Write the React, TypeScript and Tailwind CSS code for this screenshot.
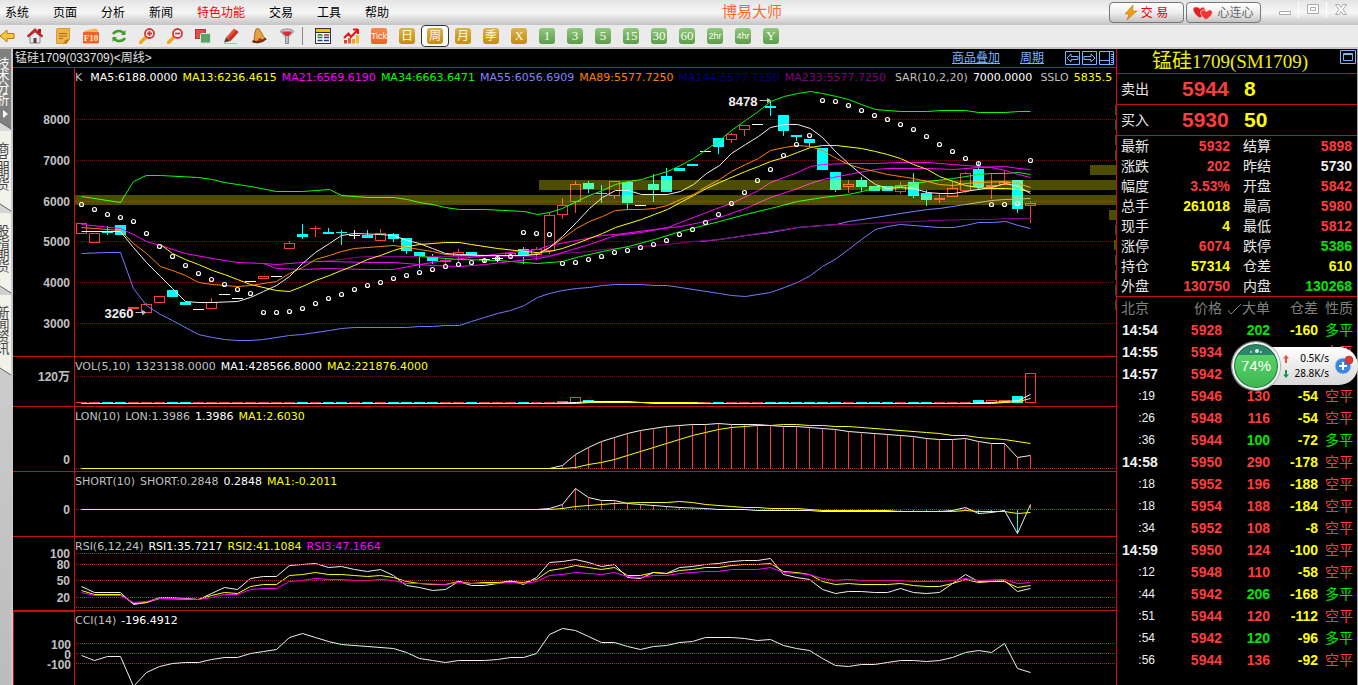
import React from "react";

type Point = [number, number];
type Candle = [kind: "r" | "c" | "w", high: number, top: number, bottom: number, low: number];

const RED = "#ff3c3c";
const CYAN = "#00ffff";
const X0 = 81;
const STEP = 13;
const xAt = (i: number) => X0 + i * STEP;

const parse = (s: string): Point[] =>
  s.trim().split(/\s+/).map((p) => p.split(",").map(Number) as Point);

function valueAt(points: Point[], x: number) {
  for (let i = 1; i < points.length; i++) {
    const [x1, y1] = points[i];
    const [x0, y0] = points[i - 1];
    if (x <= x1) return y0 + ((y1 - y0) * (x - x0)) / (x1 - x0);
  }
  return points[points.length - 1][1];
}

const candles: Candle[] = [
  ["r", 223, 223, 233, 233], ["r", 233, 233, 242, 242], ["c", 225, 232, 232, 233], ["c", 225, 225, 234, 234],
  ["r", 307, 307, 308, 308], ["r", 302, 304, 312, 312], ["r", 296, 296, 302, 302], ["c", 290, 290, 296, 296],
  ["c", 302, 302, 304, 304], ["w", 309, 309, 309, 309], ["r", 297, 302, 308, 308], ["w", 294, 294, 294, 294],
  ["w", 298, 298, 298, 298], ["w", 281, 281, 281, 281], ["r", 275, 276, 278, 278], ["w", 276, 276, 276, 276],
  ["r", 240, 243, 248, 248], ["c", 223, 234, 236, 237], ["r", 225, 228, 228, 235], ["c", 227, 232, 233, 233],
  ["c", 229, 232, 232, 243], ["w", 229, 235, 235, 237], ["c", 229, 235, 237, 237], ["r", 228, 233, 240, 240],
  ["c", 232, 234, 238, 240], ["c", 238, 238, 250, 252], ["c", 252, 252, 255, 266], ["c", 253, 257, 260, 262],
  ["r", 258, 260, 261, 262], ["r", 248, 252, 256, 261], ["c", 251, 252, 254, 254], ["w", 258, 259, 259, 261],
  ["w", 254, 258, 258, 260], ["r", 251, 253, 255, 256], ["c", 246, 249, 254, 262], ["r", 246, 249, 254, 258],
  ["r", 212, 215, 250, 252], ["r", 197, 205, 214, 217], ["r", 180, 184, 201, 211], ["c", 180, 183, 188, 191],
  ["c", 184, 193, 193, 201], ["r", 181, 181, 195, 197], ["c", 182, 182, 202, 208], ["w", 205, 205, 205, 205],
  ["c", 173, 184, 189, 200], ["c", 167, 176, 191, 191], ["c", 168, 168, 170, 170], ["c", 164, 164, 165, 165],
  ["w", 151, 151, 151, 151], ["c", 138, 138, 146, 152], ["r", 132, 134, 139, 141], ["r", 125, 125, 129, 134],
  ["w", 124, 124, 124, 124], ["c", 100, 106, 107, 114], ["c", 115, 115, 130, 134], ["c", 135, 135, 136, 139],
  ["c", 139, 139, 142, 144], ["c", 148, 148, 169, 169], ["c", 172, 172, 189, 190], ["r", 179, 184, 186, 191],
  ["c", 176, 180, 186, 190], ["c", 186, 186, 190, 190], ["c", 186, 186, 190, 190], ["r", 181, 185, 191, 192],
  ["c", 172, 182, 195, 196], ["c", 189, 193, 199, 204], ["r", 193, 198, 199, 201], ["r", 181, 188, 196, 196],
  ["r", 171, 173, 190, 191], ["c", 160, 169, 186, 188], ["r", 172, 185, 186, 197], ["r", 169, 182, 184, 184],
  ["c", 179, 180, 208, 211], ["r", 200, 203, 205, 221],
];

const sar = [
  204, 209, 214, 217, 221, 233, 246, 256, 265, 273, 279, 284, 289, 293, 312, 312, 311, 308, 303, 298, 294, 289, 285,
  282, 278, 275, 272, 269, 266, 264, 262, 260, 258, 256, 232, 233, 234, 263, 262, 259, 256, 252, 250, 247, 244, 240,
  234, 229, 222, 214, 203, 192, 180, 169, 155, 144, 135, 100, 101, 105, 110, 115, 119, 124, 129, 136, 144, 151, 158,
  163, 204, 204, 203, 160,
];

const mainLines: { color: string; pts: Point[] }[] = [
  { color: "#00ff00", pts: parse("81,196 120,202 133,181 146,175 160,175 198,177 212,179 224,182 250,186 276,191 302,191 329,189 341,195 367,197 393,197 407,199 419,202 432,204 445,207 459,209 485,209 524,211 537,214 549,212 562,208 576,201 589,195 602,190 615,184 628,181 641,179 654,175 667,171 680,165 693,158 706,149 719,140 731,130 745,120 758,111 770,101 784,96 797,93 810,91 822,93 836,96 848,99 861,104 875,109 900,111 927,111 940,110 965,110 978,112 1005,112 1018,111 1030,111") },
  { color: "#7878ff", pts: parse("81,253 107,252 120,252 133,288 146,305 160,314 172,320 198,334 212,337 224,339 237,340 250,340 263,339 289,335 302,334 329,330 341,328 354,327 406,327 419,326 432,326 445,325 459,325 471,321 484,317 497,313 510,310 524,305 537,297 549,293 562,290 576,288 589,287 602,285 615,284 641,284 654,285 667,285 680,287 719,293 731,295 745,296 770,292 784,287 797,282 810,275 822,266 836,258 848,249 861,239 875,229 887,226 900,224 939,227 953,227 965,225 978,222 992,222 1005,221 1018,225 1030,228") },
  { color: "#8282ff", pts: parse("700,241 719,239 745,235 770,232 797,227 822,225 836,224 848,221 875,217 900,213 927,209 939,208 965,204") },
  { color: "#a8a8c8", pts: parse("965,204 991,200 1005,199 1030,198") },
  { color: "#8c008c", pts: parse("320,261 341,259 354,257 367,256 537,256 549,255 562,253 589,251 602,249 628,247 654,245 667,244 693,241 719,239 758,233 797,227 836,224 848,224 887,222 913,221 939,220 965,219 991,219 1005,218 1030,218") },
  { color: "#00ff00", pts: parse("419,256 432,257 459,259 497,260 524,262 537,263 562,261 576,257 602,251 628,246 654,239 680,231 719,221 745,214 770,208 797,201 822,197 848,194 875,188 900,186 927,181 953,178 978,174 991,173 1005,173 1018,172 1030,174") },
  { color: "#ff00ff", pts: parse("81,224 120,228 133,234 146,241 160,245 185,253 212,258 237,262 263,263 276,264 315,261 329,261 367,262 393,262 419,264 432,265 459,266 485,264 510,261 537,258 549,256 562,252 589,244 615,235 641,232 667,227 680,222 706,212 719,207 731,203 758,190 770,182 797,172 810,166 822,164 848,163 875,163 900,162 927,162 953,164 978,166 991,167 1005,170 1018,174 1030,177") },
  { color: "#ff00ff", pts: parse("263,263 276,268 302,269 329,268 367,269 393,269 419,264 445,260 485,255 510,252 537,249 549,245 576,240 602,235 615,234 654,229 680,226 700,222 719,217 745,208 770,197 797,188 810,183 822,179 848,174 875,169 887,168 927,168 953,169 978,167 1005,166 1018,168 1030,169") },
  { color: "#ffff00", pts: parse("160,244 172,253 185,259 198,264 212,270 224,274 237,279 250,284 276,290 289,291 302,286 315,280 329,275 341,270 354,265 367,259 380,255 393,250 407,246 419,244 445,242 459,242 471,244 497,248 524,251 537,252 549,251 562,248 576,243 589,238 602,233 615,227 641,219 654,214 667,209 680,202 693,195 706,188 719,182 745,171 758,166 770,161 784,157 797,152 810,147 822,145 836,145 861,148 875,151 887,154 900,158 913,164 927,169 939,176 953,181 965,185 978,187 991,188 1005,188 1018,189 1030,191") },
  { color: "#ff8000", pts: parse("81,227 120,230 133,243 146,253 160,266 172,270 185,275 198,282 212,284 237,286 250,285 276,281 289,273 302,267 315,259 329,255 341,251 354,248 367,247 393,245 407,247 419,249 432,251 445,254 459,255 524,255 537,253 549,247 562,238 576,228 589,221 602,216 615,210 628,209 641,209 654,208 667,205 680,199 693,194 706,186 719,179 731,171 745,164 758,158 770,150 784,147 797,145 810,146 822,150 836,158 848,164 861,168 875,171 887,174 913,178 927,181 939,184 953,185 965,183 978,182 1005,181 1018,183 1030,187") },
  { color: "#f0f0f0", pts: parse("81,231 120,231 133,247 146,262 160,276 172,288 185,301 198,302 212,302 237,301 250,297 263,291 276,285 289,276 302,263 315,252 329,243 341,235 354,233 380,234 393,235 407,240 419,243 432,248 445,253 459,254 485,255 524,255 537,254 549,247 562,236 576,222 589,208 602,197 615,190 628,190 641,194 667,194 680,191 693,184 706,173 719,165 731,153 745,144 758,136 770,127 784,124 797,124 810,128 822,137 836,152 848,163 861,174 875,184 887,188 900,187 913,188 927,192 940,193 953,193 965,191 978,189 991,187 1005,183 1018,186 1030,193") },
];

const lon = parse("81,468 549,468 562,465 575,454 588,447 601,441 614,437 627,433 640,430 653,428 666,426 679,425 692,424 705,424 718,423 731,424 757,424 770,425 783,426 796,426 809,427 822,428 835,429 848,431 861,432 874,433 887,434 900,435 913,436 926,438 939,439 952,439 965,438 978,441 991,443 1004,443 1017,457 1030,455");
const lonMa = parse("81,468 562,468 575,467 588,464 601,462 614,459 627,455 640,451 653,447 666,443 679,439 692,435 705,432 718,429 731,427 744,426 757,425 770,425 783,424 796,424 809,425 822,425 835,426 848,426 887,429 926,432 939,433 952,435 965,435 978,437 1004,439 1030,443");
const short = parse("81,509 536,509 549,508 562,504 575,488 588,497 601,500 614,500 627,503 640,504 666,506 679,507 705,508 718,509 744,509 757,510 809,510 822,511 939,511 952,510 965,507 978,513 991,512 1004,510 1017,533 1030,504");
const shortMa = parse("81,509 549,509 562,508 575,506 614,503 640,502 666,502 679,501 692,502 705,504 731,506 744,507 757,507 770,508 796,508 809,509 822,510 887,510 900,511 952,511 965,510 978,511 1004,511 1017,513 1030,512");
const rsi1 = parse("81,586 94,592 120,592 133,604 146,602 159,597 172,597 198,599 211,593 224,587 237,589 250,578 263,576 276,576 289,565 302,564 315,563 328,567 341,566 354,569 367,571 380,569 393,575 406,585 419,587 432,590 445,589 458,581 471,585 484,585 497,583 510,580 523,584 536,577 549,562 562,561 575,559 588,562 601,566 614,564 627,577 640,578 653,572 666,573 679,567 692,566 705,564 718,563 731,561 744,560 757,560 770,558 783,574 796,577 809,579 822,589 835,593 848,591 861,591 874,592 887,592 900,588 913,592 926,593 939,592 952,583 965,574 978,581 1004,580 1017,591 1030,588");
const rsi2 = parse("81,590 94,594 120,594 133,603 146,602 159,598 198,599 211,595 224,592 237,593 250,586 263,584 276,584 289,575 302,574 315,572 328,574 341,574 354,575 367,576 380,575 393,577 406,581 419,583 432,584 445,584 458,581 471,583 484,582 497,582 510,581 523,582 536,579 549,570 562,568 575,565 588,567 601,569 614,567 627,575 640,575 653,572 666,573 679,570 692,569 705,567 718,567 731,565 744,564 757,564 770,563 783,571 796,572 809,574 822,581 835,584 848,583 861,584 887,584 900,583 913,585 926,586 939,586 952,583 965,579 978,582 991,581 1004,581 1017,587 1030,585");
const rsi3 = parse("81,592 94,595 120,595 133,602 146,601 159,598 172,598 198,599 211,597 224,594 237,594 250,589 263,588 276,588 289,581 302,580 315,578 328,579 341,579 354,580 367,580 380,579 393,580 406,583 419,583 445,584 458,582 471,583 497,583 510,582 523,583 536,581 549,575 562,574 575,572 601,574 614,572 627,576 640,577 653,575 666,575 679,573 692,572 705,571 718,571 731,569 757,569 770,567 783,572 796,573 809,574 822,578 835,580 848,579 861,580 900,580 913,581 939,581 952,580 965,578 978,580 1004,579 1017,583 1030,582");
const cci = parse("81,655 94,660 107,656 120,656 133,686 146,672 159,666 172,663 185,662 198,662 211,659 224,657 237,657 250,653 263,651 276,649 289,637 302,633 315,637 328,641 341,644 367,646 393,648 406,652 419,658 432,660 445,662 458,660 484,660 497,659 510,657 523,657 536,653 549,634 562,628 575,630 588,636 601,642 614,642 627,646 640,649 653,646 666,645 679,642 692,641 705,637 731,637 744,638 757,640 770,639 783,645 796,648 809,650 822,658 835,665 848,666 861,664 874,664 887,662 900,660 913,660 926,661 939,660 952,657 965,652 978,650 991,652 1004,643 1017,668 1030,672");

const volTop: Record<number, number> = { 37: 401, 38: 397, 39: 400, 69: 400, 70: 400, 71: 400, 72: 396, 73: 373 };

function Line({ pts, color }: { pts: Point[]; color: string }) {
  return <polyline points={pts.map((p) => p.join(",")).join(" ")} fill="none" stroke={color} strokeWidth="1" />;
}

function Grid({ ys, color = "#c81e14" }: { ys: number[]; color?: string }) {
  return (
    <g stroke={color} strokeDasharray="1 1" shapeRendering="crispEdges">
      {ys.map((y) => <line key={y} x1="75.5" x2="3999.5" y1={y} y2={y} />)}
    </g>
  );
}

type Legend = [text: string, className: string];

function Pane({
  name, top, className, axis, axisClass = "", legend, children,
}: {
  name: string; top: number; className: string; axis: [string, number][]; axisClass?: string; legend: Legend[]; children: React.ReactNode;
}) {
  return (
    <section aria-label={name} className={`flex overflow-hidden ${className}`}>
      <div className={`relative w-[62px] shrink-0 border-r border-[#c4140a] ${axisClass}`}>
        <svg className="absolute inset-0 h-full w-full font-['Liberation_Sans','Noto_Sans_CJK_SC',sans-serif] text-xs font-bold" aria-label={`${name} axis`}>
          {axis.map(([label, y]) => (
            <text key={label} x="57" y={y - top + 5} textAnchor="end" fill="#c0c0c0">{label}</text>
          ))}
        </svg>
      </div>
      <div className="relative min-w-0 flex-1">
        <svg className="absolute inset-0 h-full w-full" role="img" aria-label={`${name} chart`}>
          <g transform={`translate(-74.5 ${0.5 - top})`}>{children}</g>
        </svg>
        <div className="relative flex gap-[5px] overflow-hidden font-['DejaVu_Sans',sans-serif] text-[11px] leading-5 whitespace-nowrap">
          {legend.map(([t, c]) => <span key={t} className={c}>{t}</span>)}
        </div>
      </div>
    </section>
  );
}

function Candles() {
  return (
    <g shapeRendering="crispEdges">
      {candles.map(([kind, high, top, bottom, low], i) => {
        const x = xAt(i);
        const color = kind === "r" ? RED : kind === "c" ? CYAN : "#fff";
        return (
          <g key={i} stroke={color}>
            {high < top && <line x1={x} x2={x} y1={high} y2={top} />}
            {low > bottom && <line x1={x} x2={x} y1={bottom} y2={low + 1} />}
            {top === bottom ? (
              <line x1={x - 5.5} x2={x + 5.5} y1={top} y2={top} />
            ) : (
              <rect x={x - 5} y={top} width="10" height={bottom - top} fill={kind === "c" ? CYAN : "none"} />
            )}
          </g>
        );
      })}
    </g>
  );
}

function VolumeBars() {
  return (
    <g shapeRendering="crispEdges">
      {candles.map(([kind], i) => {
        const x = xAt(i);
        const color = kind === "c" ? CYAN : RED;
        const top = volTop[i] ?? 402;
        return top === 402 ? (
          <line key={i} x1={x - 5.5} x2={x + 5.5} y1={402} y2={402} stroke={color} />
        ) : (
          <rect key={i} x={x - 5} y={top} width="10" height={402 - top} stroke={color} fill={kind === "c" ? CYAN : "none"} />
        );
      })}
    </g>
  );
}

function Stems({ pts, base }: { pts: Point[]; base: number }) {
  return (
    <g shapeRendering="crispEdges">
      {candles.map((_, i) => {
        if (i < 37) return null;
        const x = xAt(i);
        const y = valueAt(pts, x);
        return <line key={i} x1={x} x2={x} y1={y} y2={base} stroke={y > base ? CYAN : RED} />;
      })}
    </g>
  );
}

/* ---------- toolbar icons ---------- */

function ToolIcon({ name }: { name: string }) {
  const art: Record<string, React.ReactNode> = {
    后退: <path d="M1 8 8 2v3.5h7v5H8V14Z" fill="#f7c63c" stroke="#b87a10" />,
    首页: (
      <>
        <path d="M3 8v7h10V8L8 4Z" fill="#e9e9ee" stroke="#8a8a92" />
        <path d="M11 1h3v4h-3z" fill="#b01818" />
        <path d="m0 8 8-7.5L16 8l-1.5 1L8 3.5 1.500 9Z" fill="#d8202a" stroke="#8e1016" strokeWidth=".6" />
        <path d="M6.500 10h3v5h-3z" fill="#5a4038" />
      </>
    ),
    公告: (
      <>
        <path d="M2 .5h13l-.5 2v8.500l-3 4.500H1.500V3Z" fill="#efb448" stroke="#d09028" strokeWidth=".8" />
        <path d="M4 5.500h8M4 8h8M4 10.500h4" stroke="#a86c14" />
        <path d="M8 15.500 10.500 12l4-1-3 4.500Z" fill="#c07c10" />
      </>
    ),
    F10: (
      <>
        <path d="M1 3 12 .5 15 2v3H1Z" fill="#f6b24c" />
        <rect y="4" width="16" height="11.500" rx="1" fill="#f0622c" />
        <text x="8" y="13" textAnchor="middle" fontSize="9" fontWeight="700" fill="#ffe9b8" fontFamily="Liberation Serif">F10</text>
      </>
    ),
    刷新: (
      <g fill="none" stroke="#3f9e2c" strokeWidth="2.4">
        <path d="M2 6c2.500-4 8.500-4 11-.5" />
        <path d="M14 10c-2.500 4-8.500 4-11 .5" />
        <path d="M14.500 2v5H10M1.500 14V9H6" fill="#3f9e2c" stroke="none" />
      </g>
    ),
    放大: (
      <>
        <path d="m1.500 14.500 5-5" stroke="#f3a81c" strokeWidth="3.600" strokeLinecap="round" />
        <circle cx="10.500" cy="5.500" r="4.500" fill="#fff" stroke="#dd3030" strokeWidth="1.800" />
        <path d="M8 5.500h5M10.500 3v5" stroke="#dd3030" strokeWidth="1.800" />
      </>
    ),
    缩小: (
      <>
        <path d="m1.500 14.500 5-5" stroke="#f3a81c" strokeWidth="3.600" strokeLinecap="round" />
        <circle cx="10.500" cy="5.500" r="4.500" fill="#fff" stroke="#dd3030" strokeWidth="1.800" />
        <path d="M8 5.500h5" stroke="#dd3030" strokeWidth="1.800" />
      </>
    ),
    叠加: (
      <>
        <rect x=".5" y="1.500" width="10" height="9" fill="#d95050" stroke="#b03434" />
        <rect x="5.500" y="5.500" width="10" height="9.500" rx="1" fill="#5aa468" stroke="#d4e8d4" />
      </>
    ),
    画线: (
      <>
        <path d="m3 9.500 8-9 4.500 3.500-8 9Z" fill="#e8503a" />
        <path d="m5 11 8-9 2.500 2-8 9Z" fill="#c83420" />
        <path d="m3 9.500-2 5L7.500 13Z" fill="#5a3a28" />
        <path d="M1 15.500h13" stroke="#e8a0a0" />
      </>
    ),
    预警: (
      <>
        <path d="M5 1.500C6-.5 9 .5 9 3c3 2 1.500 4.500 6 8L2.500 14C4 10 3 5 5 1.500Z" fill="#e6a23c" stroke="#8a5212" strokeWidth=".8" />
        <path d="M1.500 13c3 2 10 1 13.500-2.500" stroke="#6a3010" strokeWidth="2.200" fill="none" />
        <circle cx="9" cy="12" r="1.800" fill="#c41c1c" />
      </>
    ),
    筛选: (
      <>
        <path d="M1.500 3.500 6.500 9v6.500h3V9l5-5.500Z" fill="#b9bcc2" stroke="#777" strokeWidth=".8" />
        <ellipse cx="8" cy="3.500" rx="6.500" ry="2.500" fill="#c8c8cc" stroke="#8c8c8c" />
        <path d="M3 3.500h10L9.500 8h-3Z" fill="#e02c2c" />
      </>
    ),
    报价: (
      <>
        <rect x=".5" y=".5" width="15" height="15" fill="#fff" stroke="#333" />
        <path d="M1 1h14v3H1z" fill="#f2c400" />
        <path d="M1 4.500h14" stroke="#333" />
        <path d="M2.500 7h5" stroke="#207a20" strokeWidth="1.500" /><path d="M9 7h5" stroke="#c42020" strokeWidth="1.500" />
        <path d="M2.500 9.500h5" stroke="#207a20" strokeWidth="1.500" /><path d="M9 9.500h5" stroke="#1c3c90" strokeWidth="1.500" />
        <path d="M2.500 12.500h5M9 12.500h5" stroke="#1c3c90" strokeWidth="1.500" />
      </>
    ),
    走势: (
      <>
        <path d="M1 12h3v3.500H1z" fill="#e04030" /><path d="M5 10h3v5.500H5z" fill="#e86030" />
        <path d="M9 11h3v4.500H9z" fill="#f0a020" /><path d="M13 7h3v8.500h-3z" fill="#f4c030" />
        <path d="m1 10 4.500-4.500L8 9l6.500-7M15 1v5M15 1.500h-5" fill="none" stroke="#e01818" strokeWidth="2" />
      </>
    ),
  };
  return <svg viewBox="0 0 16 16" className="size-4" aria-hidden="true">{art[name]}</svg>;
}

const tools = ["后退", "首页", "公告", "F10", "刷新", "放大", "缩小", "叠加", "画线", "预警", "筛选"];
const goldTiles = ["日", "周", "月", "季", "X"];
const greenTiles = ["1", "3", "5", "15", "30", "60", "2hr", "4hr", "Y"];

function Toolbar() {
  const btn = "flex h-[22px] w-7 shrink-0 items-center justify-center";
  return (
    <nav aria-label="工具栏" className="flex h-6 items-center overflow-hidden border-b-2 border-[#c8c4c4] bg-[#ebebeb]">
      <div className="-ml-[7px] flex items-center">
        {tools.map((t) => <button key={t} aria-label={t} className={btn}><ToolIcon name={t} /></button>)}
        <span className="mr-[6px] ml-px h-[18px] w-px bg-[#888]" />
        <button aria-label="报价" className={btn}><ToolIcon name="报价" /></button>
        <button aria-label="走势" className={btn}><ToolIcon name="走势" /></button>
        <button className={btn}>
          <span className="flex size-4 items-center justify-center rounded-xs bg-gradient-to-b from-[#f48a50] to-[#f0601c] font-['Liberation_Sans_Narrow','Liberation_Sans',sans-serif] text-[9px] leading-4 text-white">Tick</span>
        </button>
        {goldTiles.map((t) => (
          <button key={t} aria-pressed={t === "周"} className={`${btn} ${t === "周" ? "rounded-[4px] border border-[#333] bg-white" : ""}`}>
            <span className="flex size-4 items-center justify-center rounded-[3px] bg-gradient-to-b from-[#d8b448] to-[#c68c00] font-['Liberation_Serif','Noto_Sans_CJK_SC',serif] text-xs leading-4 text-[#fff8dc]">{t}</span>
          </button>
        ))}
        {greenTiles.map((t) => (
          <button key={t} className={btn}>
            <span className={`flex size-4 items-center justify-center rounded-[3px] bg-gradient-to-b from-[#92c880] to-[#5a9c48] leading-4 text-[#fbffe8] ${t.length > 2 ? "font-['Liberation_Sans_Narrow','Liberation_Sans',sans-serif] text-[9px]" : "font-['Liberation_Serif',serif] text-[13px]"}`}>{t}</span>
          </button>
        ))}
      </div>
    </nav>
  );
}

function MenuBar() {
  const menus = ["系统", "页面", "分析", "新闻", "特色功能", "交易", "工具", "帮助"];
  const pill = "flex h-[21px] w-[75px] items-center justify-center rounded-[4px] border border-[#777] bg-gradient-to-b from-white via-[#eee] to-[#c4c4c4] text-xs";
  const win = "flex h-4 w-7 items-center justify-center";
  return (
    <header className="relative flex h-[25px] items-center justify-between bg-gradient-to-b from-[#e4e4e4] via-[#f6f6f6] to-[#c4c4c4]">
      <div className="flex gap-6 pl-[5px] text-xs text-black">
        {menus.map((m) => <button key={m} className={`shrink-0 ${m === "特色功能" ? "text-[#f00000]" : ""}`}>{m}</button>)}
      </div>
      <h1 className="absolute left-[722px] text-[15px] text-[#ff6633]">博易大师</h1>
      <div className="flex items-center gap-[2px]">
        <button className={`${pill} gap-1 text-[#f00000]`}>
          <svg viewBox="0 0 12 15" className="h-[15px] w-3" aria-hidden="true"><path d="M8 0 0 9h4l-2 6 10-9H7.500Z" fill="#f89a10" stroke="#b06a10" strokeWidth=".5" /></svg>
          交 易
        </button>
        <button className={`${pill} gap-1 text-[#666]`}>
          <svg viewBox="0 0 20 14" className="h-[14px] w-5" aria-hidden="true">
            <path d="M7 12C-1 7-1 1 3 1c2 0 3 1 4 2 1-1 3-2 4-1 3 3 0 7-4 10Z" fill="#e02020" stroke="#f8a0a0" strokeWidth=".6" />
            <path d="M13 14c-6-4-7-10-3-10 2 0 3 1 3.500 2 1-2 4-3 5.500-1 1.500 3-2 6-6 9Z" fill="#ee3434" stroke="#ffd0d0" strokeWidth=".8" />
          </svg>
          心连心
        </button>
        <div className="ml-[8px] flex w-[87px] items-start self-start">
          <button aria-label="最小化" className={`${win} border-r border-white`}><svg className="h-3 w-3" viewBox="0 0 12 12"><path d="M.5 7.500h11v3H.5z" fill="#fff" stroke="#aaa" /></svg></button>
          <button aria-label="最大化" className={`${win} border-r border-white`}><svg className="h-3 w-3" viewBox="0 0 12 12"><path d="M.5.5h11v9H.5zM3.500 3.500h5v3h-5z" fill="#fff" stroke="#aaa" /></svg></button>
          <button aria-label="关闭" className={win}><svg className="h-3 w-3" viewBox="0 0 12 12"><path d="M.5.5h3.500l2 3 2-3h3.500L8 5.500l3.500 5H8l-2-3-2 3H.5L4 5.500Z" fill="#fff" stroke="#aaa" /></svg></button>
        </div>
      </div>
    </header>
  );
}

function SideTabs() {
  const tabs = ["技术分析", "商品期货", "股指期货", "新闻资讯"];
  return (
    <nav aria-label="页面切换" className="flex w-[13px] shrink-0 flex-col border-r-2 border-[#c8c8c8] bg-gradient-to-b from-[#dcdcdc] to-[#bcbcbc]">
      {tabs.map((t, i) => (
        <button key={t} className="relative flex h-[82px] w-full flex-col items-center overflow-hidden">
          <svg className="absolute inset-0 h-full w-full" viewBox="0 0 11 82" aria-hidden="true">
            <path d="M0 0h11v80L0 73Z" fill={i === 0 ? "#808080" : "#f2f1ea"} />
            <path d="m0 73 11 7" stroke="#666" />
          </svg>
          <span className={`relative -ml-[5px] flex w-[13px] flex-1 flex-col items-center text-[13px] leading-3 ${i === 0 ? "pt-[9px] text-white" : "pt-[12px] text-[#444]"}`}>
            {[...t].map((ch) => <span key={ch}>{ch}</span>)}
            {i === 0 && <svg viewBox="0 0 5 8" className="mt-1 ml-[5px] h-2 w-[5px]" aria-hidden="true"><path d="M0 0v8l5-4Z" fill="#fff" /></svg>}
          </span>
        </button>
      ))}
    </nav>
  );
}

function ChartHeader() {
  const box = "h-[14px] w-[15px]";
  return (
    <div className="flex h-[19px] shrink-0 items-center justify-between border-b border-[#c4140a] pr-[2px] pl-[2px] text-xs">
      <h2 className="text-[#e0e0e0]">锰硅1709(033709)&lt;周线&gt;</h2>
      <div className="flex items-center text-[#78b4ff]">
        <a href="#overlay" className="underline">商品叠加</a>
        <a href="#period" className="ml-5 underline">周期</a>
        <div className="ml-[21px] flex gap-[2px]">
          <button aria-label="左移"><svg className={box} viewBox="0 0 15 14"><path d="M.5.5h14v13H.5zM2 7l4-4v2.500h7v3H6V11Z" fill="none" stroke="#78b4ff" /></svg></button>
          <button aria-label="右移"><svg className={box} viewBox="0 0 15 14"><path d="M.5.5h14v13H.5zM13 7 9 3v2.500H2v3h7V11Z" fill="none" stroke="#78b4ff" /></svg></button>
          <button aria-label="布局"><svg className={box} viewBox="0 0 15 14"><path d="M.5.5h14v13H.5zM10.500 1v12M1 9.500h9M12 3.500h2M12 5.500h2M12 7.500h2M12 9.500h2M12 11.500h2" fill="none" stroke="#78b4ff" /></svg></button>
        </div>
      </div>
    </div>
  );
}

const gray = "text-[#c0c0c0]";
const yellow = "text-[#ffff00]";
const magenta = "text-[#ff00ff]";
const divider = "border-b border-[#c4140a]";

function Charts() {
  return (
    <main className="flex min-w-0 flex-1 flex-col bg-black">
      <ChartHeader />
      <Pane
        name="K" top={68} className={`h-[289px] shrink-0 ${divider}`}
        axis={[["8000", 119], ["7000", 160], ["6000", 201], ["5000", 241], ["4000", 282], ["3000", 323]]}
        legend={[
          ["K", `${gray} mr-[3px]`], ["MA5:6188.0000", "text-white"], ["MA13:6236.4615", yellow], ["MA21:6569.6190", magenta],
          ["MA34:6663.6471", "text-[#00ff00]"], ["MA55:6056.6909", "text-[#8282ff]"], ["MA89:5577.7250", "text-[#ff8000]"],
          ["MA144:5577.7250", "text-[#000080]"], ["MA233:5577.7250", "text-[#800080]"], ["SAR(10,2,20)", `${gray} ml-1`],
          ["7000.0000", "text-white"], ["SSLO", `${gray} ml-[3px]`], ["5835.5", yellow],
        ]}
      >
        <Grid ys={[119, 160, 201, 241, 282, 323]} color="#960000" />
        <Candles />
        {mainLines.map((l, i) => <Line key={i} {...l} />)}
        <g fill="#ffff00" fillOpacity=".3" shapeRendering="crispEdges" transform="translate(-.5 -.5)">
          <rect x="75" y="195" width="1041" height="10" />
          <rect x="539" y="180" width="577" height="10" />
          <rect x="1090" y="165" width="26" height="10" />
          <rect x="1109" y="210" width="7" height="10" />
          <rect x="1114" y="240" width="2" height="10" />
          {[105, 120, 135, 150, 225, 255, 270, 285, 300].map((y) => <rect key={y} x="1115" y={y} width="1" height="10" />)}
        </g>
        {sar.map((y, i) => <circle key={i} cx={xAt(i)} cy={y} r="2" fill="none" stroke="#fff" strokeWidth="1.2" />)}
        <g stroke="#c0c0c0" fill="#c0c0c0">
          <path d="M759 100h9M767 98l3 2-3 2Z" />
          <path d="M135 312h9M142 310l3 2-3 2Z" />
        </g>
        <g fill="#f0f0f0" className="font-['Liberation_Sans',sans-serif] text-[13px] font-bold">
          <text x="728" y="105">8478</text>
          <text x="104" y="317">3260</text>
        </g>
      </Pane>
      <Pane
        name="VOL" top={357} className={`h-[50px] shrink-0 ${divider}`} axis={[["120万", 376]]}
        legend={[["VOL(5,10)", gray], ["1323138.0000", gray], ["MA1:428566.8000", "text-white"], ["MA2:221876.4000", yellow]]}
      >
        <Grid ys={[376]} color="#960000" />
        <VolumeBars />
        <Line color="#fff" pts={parse("81,403 549,403 576,402 589,401 628,401 641,402 653,403 970,403 991,402 1005,401 1018,400 1030,394")} />
        <Line color="#ffff00" pts={parse("81,403 576,403 589,402 693,402 706,403 991,403 1018,401 1030,398")} />
      </Pane>
      <Pane
        name="LON" top={407} className={`h-[65px] shrink-0 ${divider}`} axis={[["0", 459]]}
        legend={[["LON(10)", gray], ["LON:1.3986", gray], ["1.3986", "text-white"], ["MA1:2.6030", yellow]]}
      >
        <Grid ys={[468]} />
        <Stems pts={lon} base={468} />
        <Line color="#f0f0f0" pts={lon} />
        <Line color="#ffff00" pts={lonMa} />
      </Pane>
      <Pane
        name="SHORT" top={472} className={`h-[65px] shrink-0 ${divider}`} axis={[["0", 509]]}
        legend={[["SHORT(10)", gray], ["SHORT:0.2848", gray], ["0.2848", "text-white"], ["MA1:-0.2011", yellow]]}
      >
        <Grid ys={[509]} />
        <Stems pts={short} base={509} />
        <Line color="#f0f0f0" pts={short} />
        <Line color="#ffff00" pts={shortMa} />
      </Pane>
      <Pane
        name="RSI" top={537} className={`h-[74px] shrink-0 ${divider}`} axis={[["100", 553], ["80", 564], ["50", 580], ["20", 597]]}
        legend={[["RSI(6,12,24)", gray], ["RSI1:35.7217", "text-white"], ["RSI2:41.1084", yellow], ["RSI3:47.1664", magenta]]}
      >
        <Line color="#f0f0f0" pts={rsi1} />
        <Line color="#ffff00" pts={rsi2} />
        <Line color="#ff00ff" pts={rsi3} />
        <Grid ys={[553, 564, 580, 597, 607]} />
      </Pane>
      <Pane
        name="CCI" top={611} className="min-h-[74px] flex-1" axisClass="border-l border-t"
        axis={[["100", 643], ["0", 653], ["-100", 663]]}
        legend={[["CCI(14)", gray], ["-196.4912", "text-white"]]}
      >
        <Grid ys={[643, 653, 663]} />
        <Line color="#f0f0f0" pts={cci} />
      </Pane>
    </main>
  );
}

/* ---------- quote panel ---------- */

const tone: Record<string, string> = {
  r: "text-[#ff3c3c]",
  g: "text-[#00e600]",
  y: "text-[#ffff00]",
  w: "text-[#f0f0f0]",
};

const quotes: [string, string, string, string, string, string][] = [
  ["最新", "5932", "r", "结算", "5898", "r"],
  ["涨跌", "202", "r", "昨结", "5730", "w"],
  ["幅度", "3.53%", "r", "开盘", "5842", "r"],
  ["总手", "261018", "y", "最高", "5980", "r"],
  ["现手", "4", "y", "最低", "5812", "r"],
  ["涨停", "6074", "r", "跌停", "5386", "g"],
  ["持仓", "57314", "y", "仓差", "610", "y"],
  ["外盘", "130750", "r", "内盘", "130268", "g"],
];

const ticks: [string, string, string, string, string][] = [
  ["14:54", "5928", "202", "-160", "多平"],
  ["14:55", "5934", "", "-60", "空平"],
  ["14:57", "5942", "", "", ""],
  [":19", "5946", "130", "-54", "空平"],
  [":26", "5948", "116", "-54", "空平"],
  [":36", "5944", "100", "-72", "多平"],
  ["14:58", "5950", "290", "-178", "空平"],
  [":18", "5952", "196", "-188", "空平"],
  [":18", "5954", "188", "-184", "空平"],
  [":34", "5952", "108", "-8", "空平"],
  ["14:59", "5950", "124", "-100", "空平"],
  [":12", "5948", "110", "-58", "空平"],
  [":44", "5942", "206", "-168", "多平"],
  [":51", "5944", "120", "-112", "空平"],
  [":54", "5942", "120", "-96", "多平"],
  [":56", "5944", "136", "-92", "空平"],
];

function SpeedWidget() {
  return (
    <div className="absolute top-[45px] right-0 flex h-12 w-[125px] items-center">
      <div className="absolute right-[-1px] flex h-[38px] w-[104px] items-center justify-end gap-[6px] rounded-r-full bg-gradient-to-b from-white to-[#d8d8d8] pr-[5px]">
        <div className="flex w-[46px] flex-col font-['Noto_Sans',sans-serif] text-[10px] leading-[15px] text-black">
          <span className="flex items-center justify-between"><svg viewBox="0 0 6 8" className="h-2 w-[6px] shrink-0" aria-hidden="true"><path d="M3 0 0 3.500h2V8h2V3.500h2Z" fill="#e8503a" /></svg>0.5K/s</span>
          <span className="flex items-center justify-between"><svg viewBox="0 0 6 8" className="h-2 w-[6px] shrink-0" aria-hidden="true"><path d="M3 8 0 4.500h2V0h2v4.500h2Z" fill="#18944a" /></svg>28.8K/s</span>
        </div>
        <button aria-label="加速" className="size-[18px]">
          <svg viewBox="0 0 18 18" className="size-[18px] overflow-visible" aria-hidden="true">
            <circle cx="8" cy="9" r="8" fill="#3a86e0" stroke="#b8cce8" />
            <path d="M8 5v8M4 9h8" stroke="#fff" strokeWidth="2" />
            <circle cx="14" cy="3" r="4" fill="#e03a34" stroke="#9c1c1c" strokeWidth=".5" />
          </svg>
        </button>
      </div>
      <div className="relative flex size-12 items-center justify-center rounded-full border-2 border-[#f4f4f4] bg-gradient-to-b from-[#2e8468] from-25% via-[#58d068] via-25% to-[#3cb850] text-[15px] text-white shadow-[inset_0_0_0_1px_#14703c,0_0_1px_1px_#aaa]">
        <svg className="absolute top-[2px] h-3 w-6" viewBox="0 0 24 12" aria-hidden="true"><circle cx="13" cy="5" r="2" fill="#d8f4ea" /><circle cx="7" cy="6" r="1" fill="#b8e4d4" /><circle cx="17" cy="6" r="1" fill="#b8e4d4" /></svg>
        74%
      </div>
    </div>
  );
}

function QuotePanel() {
  return (
    <aside className="w-[242px] shrink-0 border-r border-l border-r-[#aaa] border-l-[#c4140a] bg-black text-sm">
      <div className={`relative flex h-[25px] items-center justify-center overflow-hidden pr-[14px] ${divider}`}>
        <h2 className="font-['Liberation_Serif','Noto_Sans_CJK_SC',serif] text-[19px] leading-6 text-[#f0f000]">
          <span className="text-xl">锰硅</span>1709(SM1709)
        </h2>
        <button aria-label="窗口" className="absolute top-px right-px">
          <svg className="h-[14px] w-4" viewBox="0 0 16 14"><path d="M.5.5h15v13H.5z" fill="none" stroke="#78b4ff" /><path d="M3.500 3.500h9v7h-9zM3 4.500h10" fill="none" stroke="#78b4ff" /></svg>
        </button>
      </div>
      {[["卖出", "5944", "8"], ["买入", "5930", "50"]].map(([label, price, qty]) => (
        <div key={label} className={`flex h-[31px] items-center pl-1 text-[21px] leading-6 font-bold ${divider}`}>
          <span className="w-[61px] text-sm font-normal text-[#e8e8e8]">{label}</span>
          <span className={`w-[62px] ${tone.r}`}>{price}</span>
          <span className={tone.y}>{qty}</span>
        </div>
      ))}
      <table className={`w-full table-fixed border-separate border-spacing-0 ${divider}`}>
        <tbody>
          {quotes.map(([l1, v1, t1, l2, v2, t2]) => (
            <tr key={l1} className="h-5 leading-5">
              <th scope="row" className="w-9 p-0 pl-1 text-left font-normal text-[#e8e8e8]">{l1}</th>
              <td className={`w-[77px] p-0 text-right font-bold ${tone[t1]}`}>{v1}</td>
              <th scope="row" className="w-[45px] p-0 pl-[13px] text-left font-normal text-[#e8e8e8]">{l2}</th>
              <td className={`p-0 pr-[5px] text-right font-bold ${tone[t2]}`}>{v2}</td>
            </tr>
          ))}
        </tbody>
      </table>
      <div className="relative">
        <table className="w-full table-fixed border-separate border-spacing-0">
          <thead>
            <tr className="h-[22px] leading-[22px] text-[#808080]">
              <th scope="col" className="w-[52px] p-0 pl-1 text-left font-normal">北京</th>
              <th scope="col" className="w-[53px] p-0 text-right font-normal">价格</th>
              <th scope="col" className="w-12 p-0 text-right font-normal whitespace-nowrap">
                <svg viewBox="0 0 13 12" className="mr-px inline h-3 w-[13px]" aria-hidden="true"><path d="m0 7 3 4L13 1" fill="none" stroke="#808080" /></svg>大单
              </th>
              <th scope="col" className="w-12 p-0 text-right font-normal">仓差</th>
              <th scope="col" className="p-0 pr-1 text-right font-normal">性质</th>
            </tr>
          </thead>
          <tbody>
            {ticks.map(([time, price, vol, diff, type], i) => {
              const c = type === "多平" ? tone.g : tone.r;
              return (
                <tr key={i} className="h-[22px] leading-[22px]">
                  <td className={`p-0 text-[#f0f0f0] ${time[0] === ":" ? "pr-[14px] text-right text-xs leading-[22px]" : "pl-[5px] font-bold"}`}>{time}</td>
                  <td className={`p-0 text-right font-bold ${tone.r}`}>{price}</td>
                  <td className={`p-0 text-right font-bold ${c}`}>{vol}</td>
                  <td className={`p-0 text-right font-bold ${tone.y}`}>{diff}</td>
                  <td className={`p-0 pr-1 text-right ${c}`}>{type}</td>
                </tr>
              );
            })}
          </tbody>
        </table>
        <SpeedWidget />
      </div>
    </aside>
  );
}

export default function App() {
  return (
    <div className="flex min-h-screen flex-col overflow-hidden bg-black font-['Liberation_Sans','Noto_Sans_CJK_SC',sans-serif]">
      <MenuBar />
      <Toolbar />
      <div className="flex flex-1">
        <SideTabs />
        <Charts />
        <QuotePanel />
      </div>
    </div>
  );
}
